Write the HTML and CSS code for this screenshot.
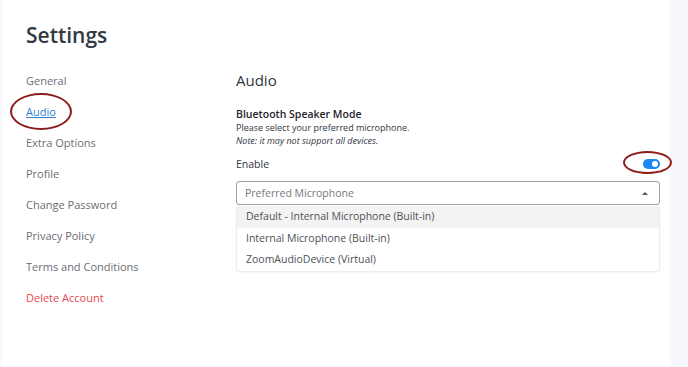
FILE: index.html
```html
<!DOCTYPE html>
<html lang="en">
<head>
  <meta charset="UTF-8">
  <meta name="viewport" content="width=device-width, initial-scale=1.0">
  <title>Settings</title>
  <link rel="stylesheet" href="styles.css">
</head>
<body>
  <div class="panel">
    <h1>Settings</h1>

    <div class="layout">
      <nav class="menu">
        <a href="#" class="menu-item">General</a>
        <a href="#" class="menu-item active">Audio <span class="mark mark-audio"></span></a>
        <a href="#" class="menu-item">Extra Options</a>
        <a href="#" class="menu-item">Profile</a>
        <a href="#" class="menu-item">Change Password</a>
        <a href="#" class="menu-item">Privacy Policy</a>
        <a href="#" class="menu-item">Terms and Conditions</a>
        <a href="#" class="menu-item danger">Delete Account</a>
      </nav>

      <main class="content">
        <h2>Audio</h2>

        <div class="section">
          <h3>Bluetooth Speaker Mode</h3>
          <p class="hint">Please select your preferred microphone.</p>
          <p class="hint note">Note: it may not support all devices.</p>
        </div>

        <div class="row">
          <span class="row-label">Enable</span>
          <span class="toggle on"><span class="knob"></span><span class="mark mark-toggle"></span></span>
        </div>

        <div class="select">
          <span class="placeholder">Preferred Microphone</span>
          <span class="caret"></span>
        </div>
        <ul class="options">
          <li class="option hover">Default - Internal Microphone (Built-in)</li>
          <li class="option">Internal Microphone (Built-in)</li>
          <li class="option">ZoomAudioDevice (Virtual)</li>
        </ul>
      </main>
    </div>
  </div>
</body>
</html>
```

FILE: styles.css
```css
body {
  font-family: "Open Sans", "DejaVu Sans", sans-serif;
  margin: 0;
  padding: 0;
  background-color: #f7f8fd;
  color: #2f3640;
}

.panel {
  width: 668px;
  height: 367px;
  margin-left: 2px;
  padding: 20px 10px 0 24px;
  box-sizing: border-box;
  background-color: #fff;
}

h1 {
  margin: 0 0 15px;
  font-size: 21px;
  line-height: 30px;
  font-weight: 600;
  color: #333a43;
}

.layout {
  display: grid;
  grid-template-columns: 210px 1fr;
}

/* sidebar */
.menu {
  display: flex;
  flex-direction: column;
}

.menu-item {
  position: relative;
  align-self: flex-start;
  font-size: 11px;
  line-height: 31px;
  font-weight: 500;
  color: #6c6d74;
  text-decoration: none;
}

.menu-item.active {
  color: #2f7fd6;
  text-decoration: underline;
}

.menu-item.danger {
  color: #e5484d;
}

/* red annotation rings */
.mark {
  position: absolute;
  border: 2px solid #8e1c1c;
  border-radius: 50%;
  pointer-events: none;
}

.mark-audio {
  left: -16px;
  top: -3px;
  width: 58px;
  height: 33px;
}

.mark-toggle {
  left: -20px;
  top: -8px;
  width: 45px;
  height: 19px;
}

/* content */
.content {
  display: flex;
  flex-direction: column;
}

h2 {
  margin: 0 0 13px;
  font-size: 15px;
  line-height: 30px;
  font-weight: 500;
  color: #2f3640;
}

h3 {
  margin: 0;
  font-size: 10.5px;
  line-height: 13px;
  font-weight: 600;
  color: #1f242b;
}

.hint {
  margin: 0;
  font-size: 9px;
  line-height: 13px;
  color: #2f3640;
}

.note {
  font-style: italic;
}

.row {
  display: flex;
  justify-content: space-between;
  align-items: center;
  height: 20px;
  margin-top: 7px;
}

.row-label {
  font-size: 10.5px;
  color: #2f3640;
}

.toggle {
  position: relative;
  width: 17px;
  height: 10px;
  border-radius: 5px;
  background-color: #1f87f3;
}

.knob {
  position: absolute;
  right: 2px;
  top: 2px;
  width: 6px;
  height: 6px;
  border-radius: 50%;
  background-color: #fff;
}

.select {
  display: flex;
  justify-content: space-between;
  align-items: center;
  height: 24px;
  margin-top: 7px;
  padding: 0 11px 0 8px;
  border: 1px solid #a0a0a0;
  border-radius: 3px;
  box-sizing: border-box;
}

.placeholder {
  font-size: 10.5px;
  color: #76787d;
}

.caret {
  width: 0;
  height: 0;
  border-left: 3px solid transparent;
  border-right: 3px solid transparent;
  border-bottom: 3px solid #555;
}

.options {
  margin: 1px 0 0;
  padding: 0;
  list-style: none;
  border: 1px solid #ececec;
  border-top: none;
  border-radius: 0 0 3px 3px;
  box-shadow: 0 1px 2px rgba(0, 0, 0, 0.05);
}

.option {
  padding-left: 9px;
  font-size: 10.5px;
  line-height: 21.5px;
  color: #4e5158;
}

.option.hover {
  background-color: #f3f3f3;
}
```
